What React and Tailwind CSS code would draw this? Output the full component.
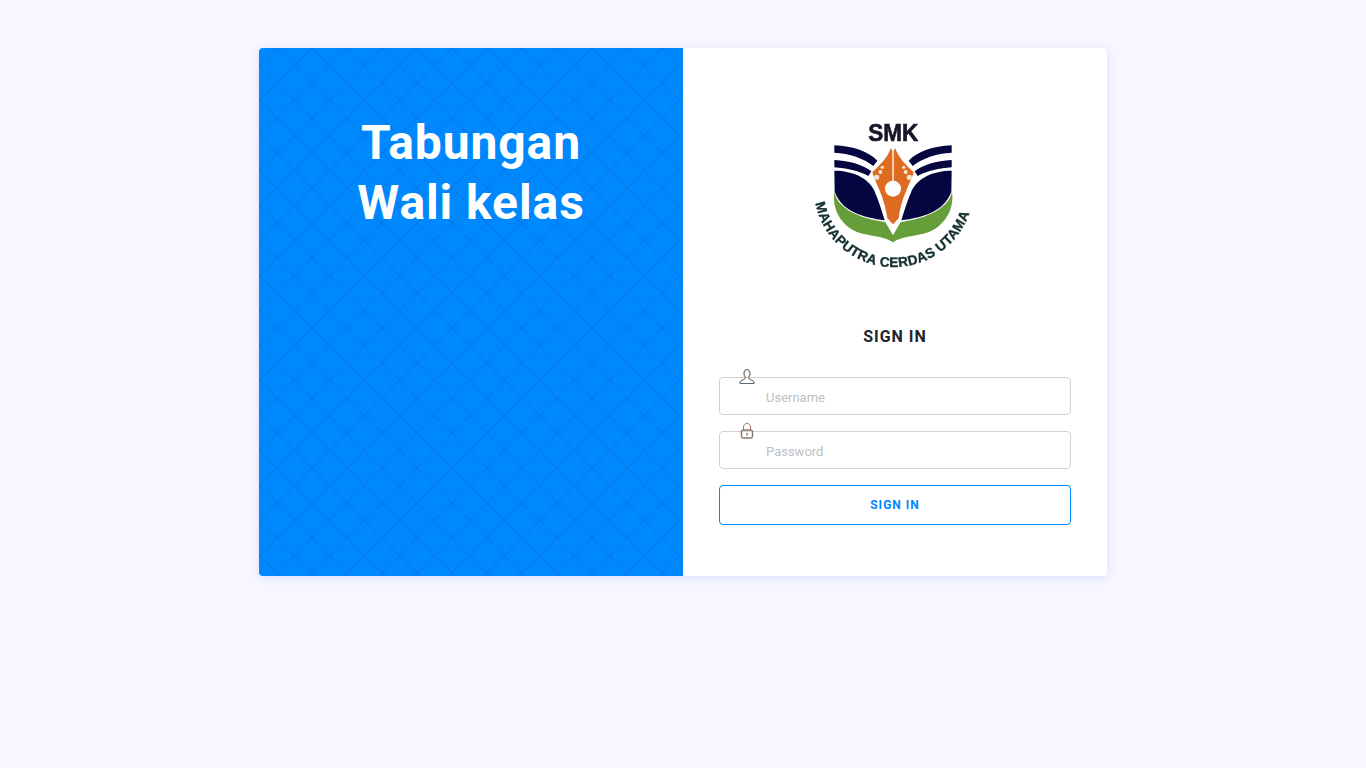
function SchoolLogo() {
    const leaf = 'M103 182C160 182 205 205 222 240C235 270 245 300 254 331C190 322 125 305 104 245Z';
    const stripeOne = 'M103 106C160 108 205 125 232 152L220 168C190 145 150 130 103 128Z';
    const stripeTwo = 'M103 150C150 152 190 165 214 184L205 198C175 182 140 175 103 172Z';

    return (
        <svg viewBox="0 0 570 510" className="w-[190px] h-[170px] blur-[0.35px]">
            <text x="280" y="93" textAnchor="middle" textLength="150" lengthAdjust="spacingAndGlyphs" fontFamily="Liberation Sans" fontWeight="700" fontSize="72" fill="#17172b" stroke="#17172b" strokeWidth="2">SMK</text>

            {/* left and right blue wings */}
            <g fill="#05053f">
                <path d={stripeOne} />
                <path d={stripeTwo} />
                <path d={leaf} />
                <g transform="translate(558 0) scale(-1 1)">
                    <path d={stripeOne} />
                    <path d={stripeTwo} />
                    <path d={leaf} />
                </g>
            </g>

            {/* green leaves */}
            <path d="M103 245C112 295 175 324 256 336L279 376L302 336C383 324 446 295 456 245C464 300 432 348 385 367C345 380 305 378 279 397C253 378 213 380 173 367C126 348 95 300 103 245Z" fill="#669f3a" />

            {/* pen nib */}
            <path d="M272 115C264 142 240 165 217 187C226 220 252 255 262 325L279 343L296 325C306 255 332 220 341 187C318 165 294 142 286 115L279 125Z" fill="#dd6b20" />
            <path d="M277 118H281V215H277Z" fill="#fff" />
            <circle cx="279" cy="236" r="24" fill="#fff" />
            <g fill="#f6e3cf">
                <circle cx="247" cy="172" r="5" />
                <circle cx="241" cy="186" r="6" />
                <circle cx="230" cy="202" r="8" />
                <circle cx="311" cy="172" r="5" />
                <circle cx="317" cy="186" r="6" />
                <circle cx="328" cy="202" r="8" />
            </g>

            <path id="logo-arc" d="M46 280A240 240 0 0 0 516 280" fill="none" />
            <text fontFamily="Liberation Sans" fontWeight="700" fontSize="41" fill="#12302f" stroke="#12302f" strokeWidth="1">
                <textPath href="#logo-arc" textLength="625" startOffset="0">MAHAPUTRA CERDAS UTAMA</textPath>
            </text>
        </svg>
    );
}

function UserIcon() {
    return (
        <svg viewBox="0 0 16 18" className="w-4 h-[18px]" fill="none" strokeWidth="1">
            <path d="M5 5.5C5 3 6.2 1.5 8 1.5S11 3 11 5.5C11 7.5 10.2 8.5 9.8 9.2C9.5 10.5 10.5 11 12 11.8C14 12.6 15 13.4 15 15.5H1C1 13.4 2 12.6 4 11.8C5.5 11 6.5 10.5 6.2 9.2C5.8 8.5 5 7.5 5 5.5Z" stroke="#d9a06b" transform="translate(-0.35 0)" />
            <path d="M5 5.5C5 3 6.2 1.5 8 1.5S11 3 11 5.5C11 7.5 10.2 8.5 9.8 9.2C9.5 10.5 10.5 11 12 11.8C14 12.6 15 13.4 15 15.5H1C1 13.4 2 12.6 4 11.8C5.5 11 6.5 10.5 6.2 9.2C5.8 8.5 5 7.5 5 5.5Z" stroke="#3f5a70" strokeOpacity="0.8" transform="translate(0.2 0)" />
        </svg>
    );
}

function LockIcon() {
    return (
        <svg viewBox="0 0 16 18" className="w-4 h-[18px]" fill="none" strokeWidth="1">
            <path d="M4.5 8V5C4.5 2.8 6 1.5 8 1.5S11.5 2.8 11.5 5V8" stroke="#b5714a" />
            <rect x="2.5" y="8" width="11" height="8" rx="1.5" stroke="#c98a55" transform="translate(-0.3 0)" />
            <rect x="2.5" y="8" width="11" height="8" rx="1.5" stroke="#48586b" strokeOpacity="0.8" transform="translate(0.2 0)" />
            <path d="M8 11V13.5" stroke="#3f3f4a" />
        </svg>
    );
}

function Field({ icon, type, placeholder }) {
    return (
        <div className="relative">
            <span className="absolute left-5 top-[-9px]">{icon}</span>
            <input
                type={type}
                placeholder={placeholder}
                className="block w-full h-[38px] pl-[46px] pr-3 pt-[2px] text-[13px] text-gray-700 bg-transparent border border-[#cfd2d8] rounded outline-none placeholder:text-[#bcbfc7]"
            />
        </div>
    );
}

export default function App() {
    return (
        <div className="min-h-screen bg-[#f6f7ff] flex justify-center pt-12 font-['Roboto',sans-serif]">
            <div className="w-[848px] h-[528px] flex rounded bg-white shadow-[0_2px_10px_rgba(90,90,230,0.16)]">
                <div className="relative w-1/2 overflow-hidden rounded-l bg-[#0088ff] pt-[65px] text-center">
                    {/* diamond background */}
                    <svg className="absolute inset-0 w-full h-full" aria-hidden="true">
                        <defs>
                            <pattern id="diamonds" x="0.5" y="0" width="35" height="35" patternUnits="userSpaceOnUse">
                                <path d="M17.5 0L35 17.5L17.5 35L0 17.5Z" fill="none" stroke="#0a62b4" strokeOpacity="0.55" strokeWidth="1" />
                            </pattern>
                        </defs>
                        <rect width="100%" height="100%" fill="url(#diamonds)" />
                    </svg>
                    <h1 className="relative text-5xl leading-[60px] font-bold tracking-[0.9px] text-white">
                        Tabungan
                        <br />
                        Wali kelas
                    </h1>
                </div>

                <div className="w-1/2 px-9 pt-[62px]">
                    <div className="flex justify-center">
                        <SchoolLogo />
                    </div>
                    <h2 className="mt-[45px] text-center text-base leading-6 font-bold tracking-[1px] text-[#212529]">SIGN IN</h2>
                    <form className="mt-[28px] flex flex-col gap-4">
                        <Field icon={<UserIcon />} type="text" placeholder="Username" />
                        <Field icon={<LockIcon />} type="password" placeholder="Password" />
                        <button type="button" className="h-10 rounded border border-[#0088ff] text-xs font-bold tracking-[1px] text-[#0088ff]">
                            SIGN IN
                        </button>
                    </form>
                </div>
            </div>
        </div>
    );
}
